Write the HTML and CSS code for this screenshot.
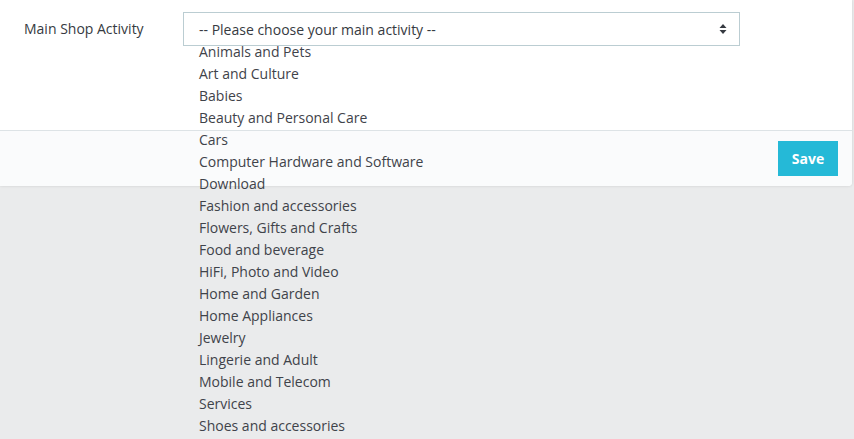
FILE: index.html
```html
<!DOCTYPE html>
<html>
<head>
<meta charset="utf-8">
<link rel="stylesheet" href="styles.css">
</head>
<body>
<div class="card">
  <div class="card-body">
    <div class="form-row">
      <label class="label">Main Shop Activity</label>
      <div class="select-wrap">
        <div class="select">
          <span>-- Please choose your main activity --</span>
          <svg class="arrows" width="8" height="12" viewBox="0 0 8 12"><path d="M4 1 L7.5 5 H0.5 Z M4 11 L7.5 7 H0.5 Z" fill="#363a41"/></svg>
        </div>
        <ul class="options">
          <li>Animals and Pets</li>
          <li>Art and Culture</li>
          <li>Babies</li>
          <li>Beauty and Personal Care</li>
          <li>Cars</li>
          <li>Computer Hardware and Software</li>
          <li>Download</li>
          <li>Fashion and accessories</li>
          <li>Flowers, Gifts and Crafts</li>
          <li>Food and beverage</li>
          <li>HiFi, Photo and Video</li>
          <li>Home and Garden</li>
          <li>Home Appliances</li>
          <li>Jewelry</li>
          <li>Lingerie and Adult</li>
          <li>Mobile and Telecom</li>
          <li>Services</li>
          <li>Shoes and accessories</li>
        </ul>
      </div>
    </div>
  </div>
  <div class="card-footer">
    <button class="btn">Save</button>
  </div>
</div>
</body>
</html>
```

FILE: styles.css
```css
html, body {
  margin: 0;
  padding: 0;
  background: #eaebec;
  font-family: "Open Sans", "Liberation Sans", sans-serif;
  font-size: 14px;
  color: #363a41;
}
html {
  height: 100%;
}
body {
  min-height: 439px;
  overflow: hidden;
}
.card {
  width: 852px;
  background: #fff;
  border-bottom-right-radius: 4px;
  box-shadow: 0 0 3px rgba(0,0,0,0.12);
}
.card-body {
  height: 131px;
  box-sizing: border-box;
  padding-top: 12px;
  border-bottom: 1px solid #dde3e6;
}
.form-row {
  display: flex;
  align-items: flex-start;
}
.label {
  width: 183px;
  box-sizing: border-box;
  padding-left: 24px;
  line-height: 34px;
  color: #363a41;
}
.select-wrap {
  position: relative;
  width: 557px;
}
.select {
  height: 34px;
  box-sizing: border-box;
  border: 1px solid #bbcdd2;
  display: flex;
  align-items: center;
  justify-content: space-between;
  padding: 0 12px 0 15px;
  color: #363a41;
}
.arrows {
  display: block;
}
.options {
  position: absolute;
  top: 29px;
  left: 16px;
  margin: 0;
  padding: 0;
  list-style: none;
  z-index: 2;
}
.options li {
  line-height: 22px;
  color: #3f434a;
  white-space: nowrap;
}
.card-footer {
  background: #fafbfc;
  height: 55px;
  box-sizing: border-box;
  padding: 10px 14px 10px 0;
  display: flex;
  justify-content: flex-end;
  border-bottom-right-radius: 4px;
}
.btn {
  width: 60px;
  height: 35px;
  border: none;
  background: #25b9d7;
  color: #fff;
  font-family: "Open Sans", "Liberation Sans", sans-serif;
  font-weight: 700;
  font-size: 14px;
  padding: 0;
}
```
